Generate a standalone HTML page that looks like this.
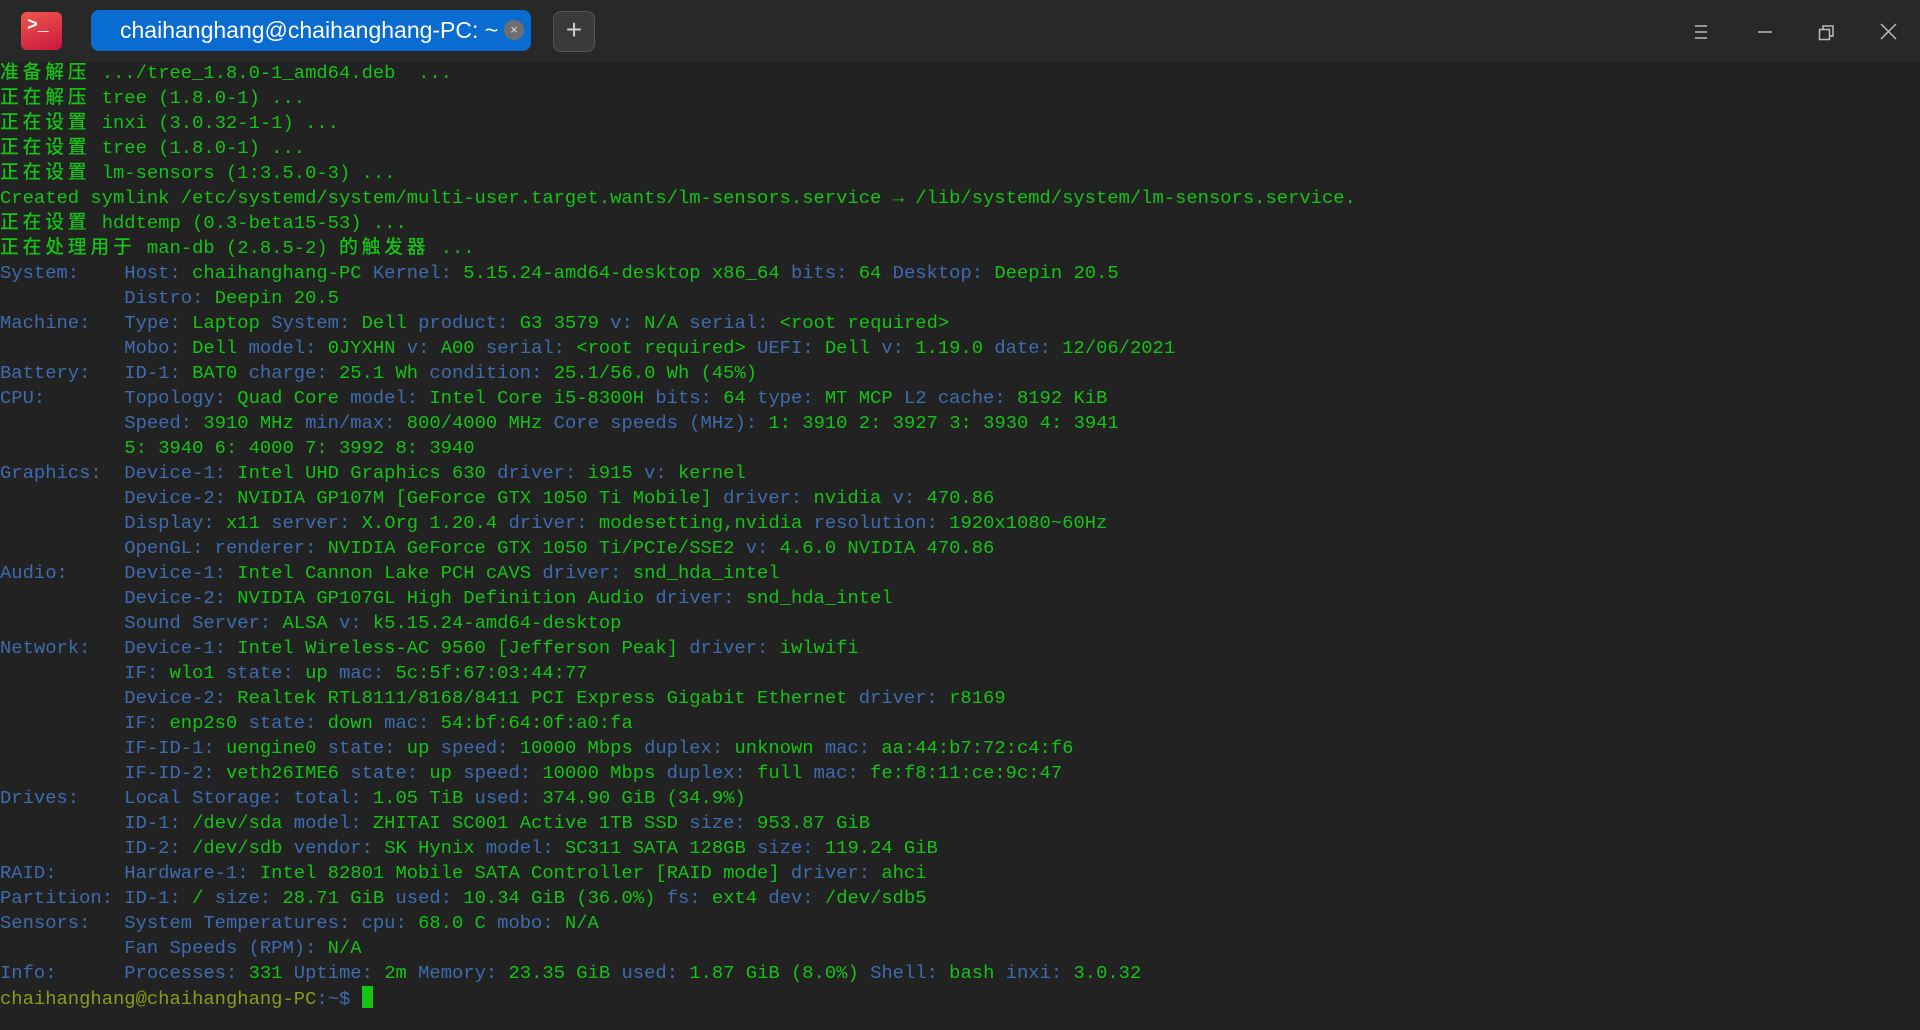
<!DOCTYPE html>
<html><head><meta charset="utf-8"><style>
*{margin:0;padding:0;box-sizing:border-box}
body{width:1920px;height:1030px;background:#222;overflow:hidden;font-family:"Liberation Sans","Noto Sans CJK SC",sans-serif}
.tb{position:absolute;left:0;top:0;width:1920px;height:62px;background:#282828}
.logo{position:absolute;left:21px;top:12px;width:41px;height:38px;border-radius:6px;background:linear-gradient(160deg,#f0574a,#c8173f);color:#fff;font:bold 18px "Liberation Mono",monospace;padding:4px 0 0 6px}
.tab{position:absolute;left:91px;top:10px;width:440px;height:41px;border-radius:8px;background:#0a6bd1;color:#fff;font-size:23px;line-height:41px;padding-left:29px}
.tab .x{position:absolute;right:7px;top:10px;width:20px;height:20px;border-radius:50%;background:#6e6e6e;color:#ddd;font-size:13px;line-height:20px;text-align:center}
.plus{position:absolute;left:553px;top:11px;width:42px;height:41px;border-radius:8px;background:#3a3a3a;border:1px solid #555;color:#ccc;font-size:28px;line-height:36px;text-align:center}
.wb{position:absolute;top:22px}
pre{position:absolute;left:0;top:61px;font-family:"Liberation Mono","Noto Sans CJK SC",monospace;font-size:18.83px;line-height:25px;color:#3d6cb0;white-space:pre}
.g{color:#14c414}.y{color:#8c9c18}
i{font-style:normal;line-height:0;letter-spacing:3.77px;font-family:"Noto Sans CJK SC",sans-serif;font-weight:500;color:#14c414}
.cur{display:inline-block;width:11px;height:22px;background:#14c414;vertical-align:-4px;line-height:0}
</style></head><body>
<div class="tb"></div>
<div class="logo">&gt;_</div>
<div class="tab">chaihanghang@chaihanghang-PC: ~<span class="x">×</span></div>
<div class="plus">+</div>
<svg class="wb" style="left:1690px" width="22" height="20"><path d="M5 4h12M5 10h12M5 16h12" stroke="#bbb" stroke-width="1.5"/></svg>
<svg class="wb" style="left:1754px" width="22" height="20"><path d="M4 10h14" stroke="#bbb" stroke-width="1.5"/></svg>
<svg class="wb" style="left:1816px" width="22" height="20"><path d="M3.5 7.5h10v10h-10zM7 7V4h10v10h-3" fill="none" stroke="#bbb" stroke-width="1.5"/></svg>
<svg class="wb" style="left:1877px" width="22" height="20"><path d="M4 2l15 15M19 2L4 17" stroke="#bbb" stroke-width="1.5"/></svg>
<pre><span class="g"><i>准备解压</i> .../tree_1.8.0-1_amd64.deb  ...
<i>正在解压</i> tree (1.8.0-1) ...
<i>正在设置</i> inxi (3.0.32-1-1) ...
<i>正在设置</i> tree (1.8.0-1) ...
<i>正在设置</i> lm-sensors (1:3.5.0-3) ...
Created symlink /etc/systemd/system/multi-user.target.wants/lm-sensors.service → /lib/systemd/system/lm-sensors.service.
<i>正在设置</i> hddtemp (0.3-beta15-53) ...
<i>正在处理用于</i> man-db (2.8.5-2) <i>的触发器</i> ...</span>
System:    Host: <span class="g">chaihanghang-PC</span> Kernel: <span class="g">5.15.24-amd64-desktop x86_64</span> bits: <span class="g">64</span> Desktop: <span class="g">Deepin 20.5</span>
           Distro: <span class="g">Deepin 20.5</span>
Machine:   Type: <span class="g">Laptop</span> System: <span class="g">Dell</span> product: <span class="g">G3 3579</span> v: <span class="g">N/A</span> serial: <span class="g">&lt;root required&gt;</span>
           Mobo: <span class="g">Dell</span> model: <span class="g">0JYXHN</span> v: <span class="g">A00</span> serial: <span class="g">&lt;root required&gt;</span> UEFI: <span class="g">Dell</span> v: <span class="g">1.19.0</span> date: <span class="g">12/06/2021</span>
Battery:   ID-1: <span class="g">BAT0</span> charge: <span class="g">25.1 Wh</span> condition: <span class="g">25.1/56.0 Wh (45%)</span>
CPU:       Topology: <span class="g">Quad Core</span> model: <span class="g">Intel Core i5-8300H</span> bits: <span class="g">64</span> type: <span class="g">MT MCP</span> L2 cache: <span class="g">8192 KiB</span>
           Speed: <span class="g">3910 MHz</span> min/max: <span class="g">800/4000 MHz</span> Core speeds (MHz): <span class="g">1:</span> <span class="g">3910</span> <span class="g">2:</span> <span class="g">3927</span> <span class="g">3:</span> <span class="g">3930</span> <span class="g">4:</span> <span class="g">3941</span>
           <span class="g">5: 3940 6: 4000 7: 3992 8: 3940</span>
Graphics:  Device-1: <span class="g">Intel UHD Graphics 630</span> driver: <span class="g">i915</span> v: <span class="g">kernel</span>
           Device-2: <span class="g">NVIDIA GP107M [GeForce GTX 1050 Ti Mobile]</span> driver: <span class="g">nvidia</span> v: <span class="g">470.86</span>
           Display: <span class="g">x11</span> server: <span class="g">X.Org 1.20.4</span> driver: <span class="g">modesetting,nvidia</span> resolution: <span class="g">1920x1080~60Hz</span>
           OpenGL: renderer: <span class="g">NVIDIA GeForce GTX 1050 Ti/PCIe/SSE2</span> v: <span class="g">4.6.0 NVIDIA 470.86</span>
Audio:     Device-1: <span class="g">Intel Cannon Lake PCH cAVS</span> driver: <span class="g">snd_hda_intel</span>
           Device-2: <span class="g">NVIDIA GP107GL High Definition Audio</span> driver: <span class="g">snd_hda_intel</span>
           Sound Server: <span class="g">ALSA</span> v: <span class="g">k5.15.24-amd64-desktop</span>
Network:   Device-1: <span class="g">Intel Wireless-AC 9560 [Jefferson Peak]</span> driver: <span class="g">iwlwifi</span>
           IF: <span class="g">wlo1</span> state: <span class="g">up</span> mac: <span class="g">5c:5f:67:03:44:77</span>
           Device-2: <span class="g">Realtek RTL8111/8168/8411 PCI Express Gigabit Ethernet</span> driver: <span class="g">r8169</span>
           IF: <span class="g">enp2s0</span> state: <span class="g">down</span> mac: <span class="g">54:bf:64:0f:a0:fa</span>
           IF-ID-1: <span class="g">uengine0</span> state: <span class="g">up</span> speed: <span class="g">10000 Mbps</span> duplex: <span class="g">unknown</span> mac: <span class="g">aa:44:b7:72:c4:f6</span>
           IF-ID-2: <span class="g">veth26IME6</span> state: <span class="g">up</span> speed: <span class="g">10000 Mbps</span> duplex: <span class="g">full</span> mac: <span class="g">fe:f8:11:ce:9c:47</span>
Drives:    Local Storage: total: <span class="g">1.05 TiB</span> used: <span class="g">374.90 GiB (34.9%)</span>
           ID-1: <span class="g">/dev/sda</span> model: <span class="g">ZHITAI SC001 Active 1TB SSD</span> size: <span class="g">953.87 GiB</span>
           ID-2: <span class="g">/dev/sdb</span> vendor: <span class="g">SK Hynix</span> model: <span class="g">SC311 SATA 128GB</span> size: <span class="g">119.24 GiB</span>
RAID:      Hardware-1: <span class="g">Intel 82801 Mobile SATA Controller [RAID mode]</span> driver: <span class="g">ahci</span>
Partition: ID-1: <span class="g">/</span> size: <span class="g">28.71 GiB</span> used: <span class="g">10.34 GiB (36.0%)</span> fs: <span class="g">ext4</span> dev: <span class="g">/dev/sdb5</span>
Sensors:   System Temperatures: cpu: <span class="g">68.0 C</span> mobo: <span class="g">N/A</span>
           Fan Speeds (RPM): <span class="g">N/A</span>
Info:      Processes: <span class="g">331</span> Uptime: <span class="g">2m</span> Memory: <span class="g">23.35 GiB</span> used: <span class="g">1.87 GiB (8.0%)</span> Shell: <span class="g">bash</span> inxi: <span class="g">3.0.32</span>
<span class="y">chaihanghang@chaihanghang-PC</span>:~$ <span class="cur"></span></pre>
</body></html>
